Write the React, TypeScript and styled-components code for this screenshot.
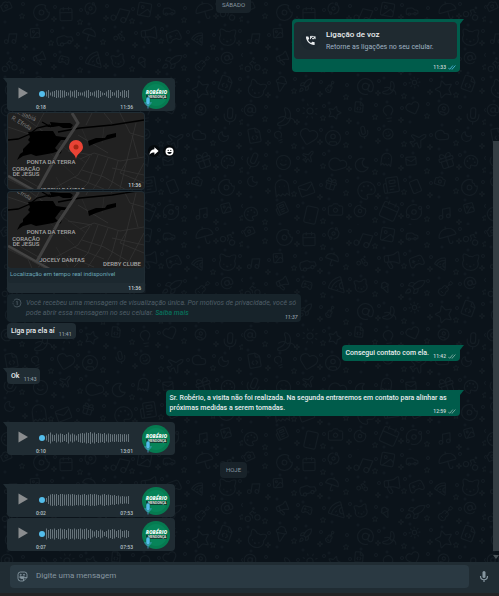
import React from 'react';
import styled, { createGlobalStyle } from 'styled-components';
import {
  AtSign, Banana, Camera, Car, Cat, Cloud, Donut, FileCode, Gamepad2, Ghost, Gift, Guitar, Heart, IceCreamCone,
  Image, Lightbulb, Mail, Megaphone, Mic, Moon, Music, Newspaper, Orbit, Palette, Pizza, Plane, Rocket, Smile,
  Smartphone, Sparkle, Star, Sun, Umbrella, UserCircle, Calendar, Bike,
} from 'lucide-react';

const GlobalStyle = createGlobalStyle`
  *, *::before, *::after { box-sizing: border-box; }
  body { margin: 0; background: #0b141a; }
  button, input { font: inherit; }
`;

const Page = styled.div`
  display: flex;
  flex-direction: column;
  min-height: 100vh;
  font-family: Roboto, 'Open Sans', sans-serif;
  font-size: 7px;
  line-height: 10px;
  color: #e9edef;
  background: #222325;
`;

const Chat = styled.main`
  position: relative;
  display: flex;
  flex: 1;
  overflow: hidden;
  background: #0b131a;
`;

const Wallpaper = styled.svg`
  position: absolute;
  inset: 0;
  width: 100%;
  height: 100%;
  color: #141d24;
`;

const Messages = styled.div`
  position: relative;
  display: flex;
  flex: 1;
  flex-direction: column;
  margin-top: -3px;
  padding: 0 33px 10px 7px;
`;

const ScrollTrack = styled.div`
  position: relative;
  display: flex;
  flex-direction: column;
  align-items: center;
  width: 6px;
  padding-bottom: 3px;
`;

const ScrollSpace = styled.div`
  flex: 141;
`;

const ScrollThumb = styled.div`
  flex: 410;
  width: 100%;
  background: #343d43;
`;

const ScrollArrow = styled.div`
  margin-top: 4px;
  border: 3px solid transparent;
  border-top: 4px solid #4b5459;
  border-bottom: 0;
`;

const DateChip = styled.div<{ $gap?: number }>`
  align-self: center;
  margin-top: ${(p) => p.$gap ?? 0}px;
  padding: 3px 6px;
  border-radius: 4px;
  background: #182229;
  color: #8696a0;
  font-size: 6px;
`;

const Row = styled.div<{ $out?: boolean; $gap: number }>`
  display: flex;
  align-items: center;
  justify-content: ${(p) => (p.$out ? 'flex-end' : 'flex-start')};
  margin-top: ${(p) => p.$gap}px;
`;

const Bubble = styled.div<{ $out?: boolean; $tail?: boolean }>`
  position: relative;
  max-width: 65%;
  border-radius: 4px;
  background: ${(p) => (p.$out ? '#005c4b' : '#202c33')};
  ${(p) =>
    p.$tail &&
    `
    border-top-${p.$out ? 'right' : 'left'}-radius: 0;
    &::before {
      content: '';
      position: absolute;
      top: 0;
      ${p.$out ? 'right' : 'left'}: -4px;
      width: 4px;
      height: 5px;
      background: inherit;
      clip-path: ${p.$out ? 'polygon(0 0, 100% 0, 0 100%)' : 'polygon(0 0, 100% 0, 100% 100%)'};
    }
  `}
`;

const TextBubble = styled(Bubble)`
  padding: 3px 4px;
  font-weight: 500;
`;

const MetaSpace = styled.span<{ $out?: boolean }>`
  display: inline-block;
  width: ${(p) => (p.$out ? 27 : 17)}px;
`;

const Meta = styled.span<{ $dim?: boolean }>`
  position: absolute;
  right: 4px;
  bottom: 1px;
  display: flex;
  align-items: center;
  gap: 2px;
  color: ${(p) => (p.$dim ? '#8f9da6' : '#d0d9db')};
  font-size: 5px;
  font-weight: 500;
  line-height: 8px;
`;

const CallBubble = styled(Bubble)`
  width: 168px;
  padding: 3px 3px 13px 2px;
`;

const CallCard = styled.div`
  display: flex;
  align-items: center;
  gap: 6px;
  height: 37px;
  padding: 0 7px;
  border-radius: 4px;
  background: #1f2a30;
`;

const CallIcon = styled.span`
  display: flex;
  align-items: center;
  justify-content: center;
  width: 19px;
  height: 19px;
  border-radius: 50%;
  background: #1c272e;
`;

const CallTitle = styled.div`
  font-size: 8px;
  font-weight: 500;
  line-height: 12px;
`;

const CallText = styled.div`
  color: #9fb3c2;
  line-height: 12px;
`;

const VoiceBubble = styled(Bubble)`
  display: flex;
  align-items: center;
  width: 168px;
  height: 33px;
  padding: 0 5px 0 8px;
`;

const PlayButton = styled.button`
  display: flex;
  width: 16px;
  height: 16px;
  margin-bottom: 3px;
  padding: 2px 2px 2px 3px;
  border: 0;
  background: none;
`;

const Track = styled.div`
  display: flex;
  flex: 1;
  flex-direction: column;
  padding: 6px 9px 0 5px;
`;

const Wave = styled.svg`
  display: block;
  width: 94px;
  height: 18px;
`;

const Times = styled.div`
  display: flex;
  justify-content: space-between;
  color: #b8c3c9;
  font-size: 5px;
  font-weight: 500;
  line-height: 8px;
`;

const MapBubble = styled(Bubble)`
  width: 138px;
  padding: 1px;
`;

const MapDrawing = styled.svg`
  display: block;
  width: 100%;
  border-radius: 3px;
`;

const MapCaption = styled.div`
  padding: 1px 2px 4px;
  border-radius: 0 0 3px 3px;
  background: #1c282f;
  color: #6aa5b4;
  font-size: 6px;
`;

const MapFooter = styled.div`
  height: 9px;
`;

const RoundButton = styled.button`
  display: flex;
  align-items: center;
  justify-content: center;
  width: 12px;
  height: 12px;
  margin-left: 3px;
  padding: 0;
  border: 0;
  border-radius: 50%;
  background: #05090c;
`;

const OnceBubble = styled(Bubble)`
  display: flex;
  gap: 4px;
  width: 65%;
  padding: 4px 5px;
  background: #17232a;
  color: #4f5e67;
  font-size: 7px;
  font-style: italic;
`;

const OnceIcon = styled.svg`
  flex: none;
  width: 10px;
  height: 10px;
`;

const MoreLink = styled.a`
  color: #08705b;
  font-weight: 500;
  text-decoration: none;
`;

const Composer = styled.form`
  display: flex;
  align-items: center;
  gap: 9px;
  padding: 3px 10px 5px;
  margin-bottom: 3px;
  background: #202c33;
`;

const Field = styled.div`
  display: flex;
  flex: 1;
  align-items: center;
  height: 23px;
  padding: 0 7px;
  border-radius: 4px;
  background: #2a3942;
`;

const IconButton = styled.button`
  display: flex;
  align-items: center;
  justify-content: center;
  width: 11px;
  height: 14px;
  padding: 0;
  border: 0;
  background: none;
  color: #8696a0;
`;

const TextInput = styled.input`
  flex: 1;
  min-width: 0;
  margin-left: 8px;
  padding: 0 0 2px;
  border: 0;
  outline: 0;
  background: none;
  color: #d1d7db;
  font-size: 8px;
  line-height: 12px;
  &::placeholder { color: #8696a0; opacity: 1; }
`;

const doodles = [
  Camera, Cloud, Star, Pizza, Orbit, Mail, Heart, Rocket, Car, Newspaper, Smile, Banana, Megaphone, Donut, Moon,
  FileCode, Cat, Music, Gift, UserCircle, Guitar, Umbrella, Smartphone, Plane, Sun, Gamepad2, Calendar, Ghost,
  Lightbulb, IceCreamCone, Image, Palette, Mic, AtSign, Bike,
];

function Doodles() {
  const cells: React.ReactNode[] = [];
  for (let row = 0; row < 9; row++) {
    for (let col = 0; col < 9; col++) {
      const n = row * 9 + col;
      const Icon = doodles[(n * 13 + row * 5) % doodles.length];
      const size = 12 + ((n * 7) % 10);
      const x = col * 27 + ((n * 11) % 6);
      const y = row * 25 + ((n * 17) % 7);
      cells.push(
        <g key={n}>
          <g transform={`rotate(${((n * 37) % 50) - 25} ${x + size / 2} ${y + size / 2})`}>
            <Icon x={x} y={y} width={size} height={size} strokeWidth={24 / size} />
          </g>
          <circle cx={x + 23} cy={y + 4} r="1.5" fill="none" stroke="currentColor" strokeWidth="0.8" />
          <circle cx={x + 5} cy={y + 22} r="1" fill="none" stroke="currentColor" strokeWidth="0.8" />
          {n % 2 ? (
            <Sparkle x={x + 19} y={y + 13} width={6} height={6} strokeWidth={3} />
          ) : (
            <Star x={x + 19} y={y + 13} width={6} height={6} strokeWidth={3} />
          )}
        </g>,
      );
    }
  }
  return (
    <Wallpaper aria-hidden="true">
      <defs>
        <pattern id="doodles" width="243" height="225" patternUnits="userSpaceOnUse">
          {cells}
        </pattern>
      </defs>
      <rect width="100%" height="100%" fill="url(#doodles)" />
    </Wallpaper>
  );
}

function Ticks({ read }: { read?: boolean }) {
  return (
    <svg width="8" height="5" viewBox="0 0 8 5" fill="none" stroke={read ? '#53bdeb' : '#8fb5ae'} strokeWidth="0.8">
      <path d="M.3 2.8 1.7 4.3 4.9.5M3.5 3.8l.5.5L7.4.5" />
    </svg>
  );
}

const waves = {
  a: [5, 8, 3, 5, 6, 8, 7, 8, 7, 7, 4, 3, 7, 5, 7, 8, 4, 3, 3, 5, 7, 8, 4, 3, 5, 7, 8, 6, 3, 2, 5, 8, 8, 4, 3, 7, 8, 4, 7, 8, 6, 8],
  b: [5, 8, 11, 7, 6, 9, 7, 9, 8, 6, 8, 11, 7, 9, 7, 5, 8, 9, 10, 9, 11, 10, 12, 9, 11, 8, 10, 9, 8, 10, 7, 9, 8, 7, 8, 7, 8, 8, 7, 8, 7, 8],
  c: [4, 8, 11, 12, 11, 12, 10, 12, 12, 11, 11, 12, 11, 12, 11, 10, 11, 10, 11, 12, 10, 11, 12, 11, 12, 11, 10, 9, 11, 12, 10, 11, 10, 9, 10, 8, 9, 7, 8, 7, 7, 8],
  d: [11, 8, 10, 9, 11, 8, 10, 11, 9, 10, 8, 11, 10, 9, 11, 9, 10, 11, 9, 10, 11, 8, 10, 7, 5, 8, 6, 9, 7, 4, 6, 9, 8, 10, 9, 6, 8, 9, 6, 7, 8, 6],
};

function Avatar() {
  return (
    <svg width="28" height="28" viewBox="0 0 28 28" role="img" aria-label="Robério Mendonça">
      <circle cx="14" cy="14" r="14" fill="#067a50" />
      <circle cx="14" cy="14" r="11" fill="#078459" />
      <text x="14.5" y="13" textAnchor="middle" fontFamily="Open Sans, sans-serif" fontSize="5" fontWeight="800" fontStyle="italic" fill="#eef7f2">
        ROBÉRIO
      </text>
      <rect x="4" y="14" width="21" height="4" fill="#123f32" />
      <text x="15" y="17" textAnchor="middle" fontFamily="Open Sans, sans-serif" fontSize="3" fontWeight="700" fill="#e3eae6">
        MENDONÇA
      </text>
      <rect x="4" y="16" width="4" height="8" rx="2" fill="#53bdeb" stroke="#0b5b45" strokeWidth="0.5" />
      <path d="M3 21c0 4.600 6 4.600 6 0M6 24.500v3" fill="none" stroke="#4aa9d2" strokeWidth="0.8" />
    </svg>
  );
}

function Voice(p: { gap: number; wave: number[]; length: string; time: string; tail?: boolean }) {
  return (
    <Row $gap={p.gap}>
      <VoiceBubble $tail={p.tail}>
        <PlayButton aria-label="Reproduzir">
          <svg width="11" height="12" viewBox="0 0 11 12">
            <path d="M.5.5 10 6 .5 11.500z" fill="#8a8d8f" />
          </svg>
        </PlayButton>
        <Track>
          <Wave viewBox="0 0 94 18" aria-hidden="true">
            {p.wave.map((h, i) => (
              <rect key={i} x={10 + i * 2} y={9 - h / 2} width="1" height={h} fill="#66737a" />
            ))}
            <circle cx="6" cy="9" r="3" fill="#53bdeb" />
          </Wave>
          <Times>
            <span>{p.length}</span>
            <span>{p.time}</span>
          </Times>
        </Track>
        <Avatar />
      </VoiceBubble>
    </Row>
  );
}

function MapView({ top, pin }: { top: number; pin?: boolean }) {
  return (
    <MapDrawing viewBox={`0 ${top} 136 76`} role="img" aria-label="Mapa">
      <rect width="136" height="90" fill="#212121" />
      <g fill="none" stroke="#333" strokeWidth="0.8">
        <path d="M0 14 24 22 36 0M10 0 40 22M72 46 86 40 112 48 136 44M82 43 70 62 30 84M90 42 80 70 66 84M100 45 92 66 80 84M110 48 104 70 96 84M120 46 112 60 136 70M74 57 96 64 130 84M66 64 96 76M60 73 86 84M104 55 136 62M128 10 110 84M136 50 118 84M84 0 78 12M96 0 104 10M112 0 122 20 136 24M70 22 100 40M60 38 84 42M0 66 20 76 26 90M6 60 34 76M124 22 130 44" />
        <path d="M40 38 66 62M50 30 78 50M48 64 60 84M96 14 94 30M74 16 80 30" strokeWidth="0.500" />
      </g>
      <g fill="#000">
        <path d="M9 47 12 41 15 39 15 36 22 29 20 27 22 24 20 19 31 18 45 18 48 23 55 24 62 25 58 27 53 27 47 35 50 38 45 40 34 42 28 43 23 41 15 43z" />
        <path d="M38 14 43 12 42 9 52 10 62 10 65 12 63 15 55 15 51 13 45 14z" />
        <path d="M80 28 88 25 97 25 99 22 108 20 108 24 97 27 88 30 81 33z" />
        <path d="M49 39 54 36 53 40 50 42z" />
      </g>
      <path d="M0 27 10 26 22 21 29 15 42 12M34 9 43 14M50 19 72 15 104 12 136 7" fill="none" stroke="#000" strokeWidth="1.300" />
      <path d="M64 0 70 10 50 40 28 80" fill="none" stroke="#414141" strokeWidth="3" />
      <path d="M0 63 48 90" fill="none" stroke="#444" strokeWidth="3" />
      <path d="M0 64.500 46 90" fill="none" stroke="#292929" strokeWidth="0.600" />
      <g fill="#a6a6a6" fontFamily="Roboto, sans-serif" fontSize="6" fontWeight="500" textAnchor="middle" stroke="#212121" strokeWidth="1" paintOrder="stroke">
        <text x="43" y="51">PONTA DA TERRA</text>
        <text x="18" y="58">CORAÇÃO</text>
        <text x="18" y="63">DE JESUS</text>
        <text x="54" y="79">JOCELY DANTAS</text>
        <text x="114" y="83">DERBY CLUBE</text>
      </g>
      <g fill="#777" fontFamily="Roboto, sans-serif" fontSize="6">
        <text transform="translate(3 6) rotate(31)">R. Efrida</text>
        <text transform="translate(7 0) rotate(22)">R. Sabiá</text>
      </g>
      {pin && (
        <g>
          <path d="M68 46c-1-6-7-7-7-12a7 7 0 0 1 14 0c0 5-6 6-7 12z" fill="#ea4335" />
          <circle cx="68" cy="34" r="2.500" fill="#a52714" />
        </g>
      )}
    </MapDrawing>
  );
}

export default function App() {
  return (
    <Page>
      <GlobalStyle />
      <Chat>
        <Doodles />
        <Messages>
          <DateChip>SÁBADO</DateChip>
          <Row $out $gap={6}>
            <CallBubble $out $tail>
              <CallCard>
                <CallIcon>
                  <svg width="11" height="11" viewBox="0 0 24 24" fill="#e9edef">
                    <path d="M20 15.500c-1.200 0-2.400-.2-3.600-.6-.3-.1-.7 0-1 .2l-2.200 2.200a15 15 0 0 1-6.600-6.600l2.200-2.200c.3-.3.4-.7.200-1A11 11 0 0 1 7.500 4c0-.6-.4-1-1-1H3c-.6 0-1 .4-1 1 0 9.400 8.600 18 18 18 .6 0 1-.4 1-1v-4.500c0-.6-.4-1-1-1z" />
                    <path d="M12 3v6M12 3h6M12 3l6 6 4-5M18 9l4-5M17 4h5v5" fill="none" stroke="#e9edef" strokeWidth="2" />
                  </svg>
                </CallIcon>
                <div>
                  <CallTitle>Ligação de voz</CallTitle>
                  <CallText>Retorne as ligações no seu celular.</CallText>
                </div>
              </CallCard>
              <Meta>11:33 <Ticks read /></Meta>
            </CallBubble>
          </Row>
          <Voice gap={6} wave={waves.a} length="0:18" time="11:36" tail />
          <Row $gap={1}>
            <MapBubble>
              <MapView top={0} pin />
              <Meta>11:36</Meta>
            </MapBubble>
            <RoundButton aria-label="Encaminhar">
              <svg width="10" height="10" viewBox="0 0 24 24" fill="#fff">
                <path d="M13 3v5C5 9 2 14 1 21c3-4 7-5.500 12-5.500V21l10-9z" />
              </svg>
            </RoundButton>
            <RoundButton aria-label="Reagir">
              <svg width="9" height="9" viewBox="0 0 9 9">
                <circle cx="4.500" cy="4.500" r="4" fill="#fff" />
                <path d="M2.300 5h4.400c-.2 2.500-4.200 2.500-4.400 0z" fill="#05090c" />
                <circle cx="3.200" cy="3.400" r=".6" fill="#05090c" />
                <circle cx="5.800" cy="3.400" r=".6" fill="#05090c" />
              </svg>
            </RoundButton>
          </Row>
          <Row $gap={1}>
            <MapBubble>
              <MapView top={9} />
              <MapCaption>Localização em tempo real indisponível</MapCaption>
              <MapFooter />
              <Meta>11:36</Meta>
            </MapBubble>
          </Row>
          <Row $gap={1}>
            <OnceBubble>
              <OnceIcon viewBox="0 0 10 10" fill="none" stroke="currentColor" strokeWidth="0.8">
                <circle cx="5" cy="5" r="4" strokeDasharray="10 1 1 1 1 1" />
                <path d="M4.300 3.800 5.200 3.200v3.800" />
              </OnceIcon>
              <span>
                Você recebeu uma mensagem de visualização única. Por motivos de privacidade, você só pode abrir essa
                mensagem no seu celular. <MoreLink href="#">Saiba mais</MoreLink>
              </span>
              <Meta $dim>11:37</Meta>
            </OnceBubble>
          </Row>
          <Row $gap={1}>
            <TextBubble>Liga pra ela aí<MetaSpace /><Meta $dim>11:41</Meta></TextBubble>
          </Row>
          <Row $out $gap={6}>
            <TextBubble $out $tail>Consegui contato com ela.<MetaSpace $out /><Meta>11:42 <Ticks /></Meta></TextBubble>
          </Row>
          <Row $gap={7}>
            <TextBubble $tail>Ok<MetaSpace /><Meta $dim>11:43</Meta></TextBubble>
          </Row>
          <Row $out $gap={6}>
            <TextBubble $out $tail>
              Sr. Robério, a visita não foi realizada. Na segunda entraremos em contato para alinhar as próximas
              medidas a serem tomadas.<MetaSpace $out />
              <Meta>12:59 <Ticks /></Meta>
            </TextBubble>
          </Row>
          <Voice gap={6} wave={waves.b} length="0:10" time="13:01" tail />
          <DateChip $gap={7}>HOJE</DateChip>
          <Voice gap={6} wave={waves.c} length="0:02" time="07:53" tail />
          <Voice gap={1} wave={waves.d} length="0:07" time="07:53" />
        </Messages>
        <ScrollTrack aria-hidden="true">
          <ScrollSpace />
          <ScrollThumb />
          <ScrollArrow />
        </ScrollTrack>
      </Chat>
      <Composer>
        <Field>
          <IconButton type="button" aria-label="Emojis">
            <svg width="11" height="11" viewBox="0 0 22 22" fill="none" stroke="currentColor" strokeWidth="1.800">
              <path d="M7 2h8q5 0 5 5v6l-7 7H7q-5 0-5-5V7q0-5 5-5zM20 13h-4q-3 0-3 3v4" />
              <path d="M5.500 11.500h9c-.5 5-8.500 5-9 0z" fill="currentColor" />
              <circle cx="7.500" cy="7.500" r="1" fill="currentColor" />
              <circle cx="14" cy="7.500" r="1" fill="currentColor" />
            </svg>
          </IconButton>
          <TextInput aria-label="Digite uma mensagem" placeholder="Digite uma mensagem" />
        </Field>
        <IconButton type="button" aria-label="Mensagem de voz">
          <svg width="10" height="13" viewBox="0 0 10 13">
            <rect x="3.500" y="1" width="3" height="7" rx="1.500" fill="currentColor" />
            <path d="M1.500 6c0 5 7 5 7 0M5 9.500V12" fill="none" stroke="currentColor" strokeWidth="1.200" />
          </svg>
        </IconButton>
      </Composer>
    </Page>
  );
}
